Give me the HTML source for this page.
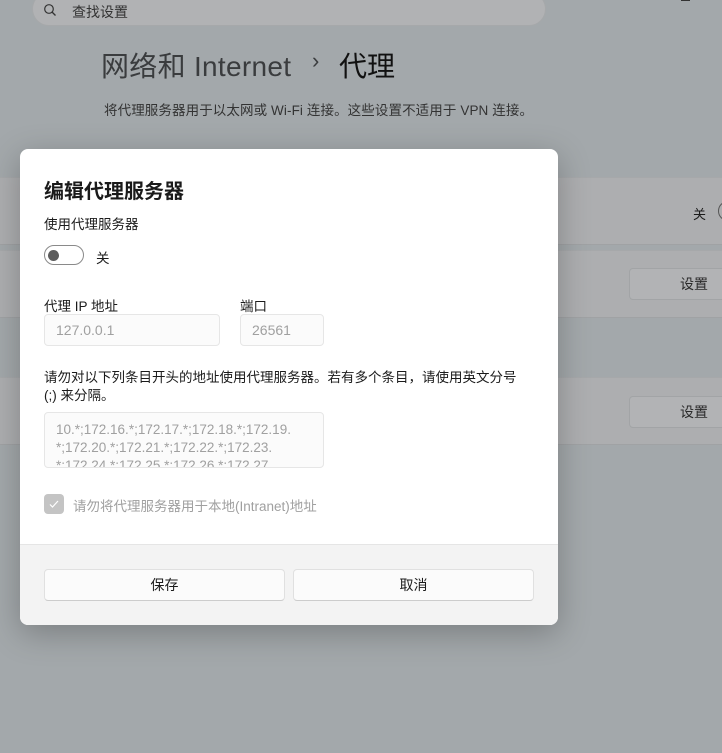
<!DOCTYPE html>
<html><head><meta charset="utf-8"><style>
*{box-sizing:border-box;margin:0;padding:0}
body{width:722px;height:753px;overflow:hidden;background:#a3a8ab;font-family:"Liberation Sans","Noto Sans CJK SC",sans-serif;position:relative;color:#1b1b1b}
.a{position:absolute}
.card{position:absolute;left:0;width:722px;background:#adaeb0;border-top:1px solid #a6a8aa;border-bottom:1px solid #a0a2a4}
.sbtn{position:absolute;left:629px;width:100px;height:32px;border:1px solid #a2a4a6;border-radius:4px;background:#b2b3b5;font-size:14px;line-height:30px;padding-left:50px;color:#2a2a2a}
.dlg{position:absolute;left:20px;top:149px;width:538px;height:476px;background:#fff;border-radius:8px;overflow:hidden;box-shadow:0 8px 32px rgba(0,0,0,.25)}
.inp{position:absolute;height:32px;border:1px solid #e6e6e6;border-radius:4px;background:#fbfbfb;color:#a0a0a0;font-size:14px;padding-left:11px;line-height:30px}
.btn{position:absolute;top:420px;width:241px;height:32px;background:#fbfbfb;border:1px solid #e0e0e0;border-bottom-color:#ccc;border-radius:4px;font-size:14px;text-align:center;line-height:30px}
</style></head><body>
<div class="a" style="left:32px;top:-8px;width:514px;height:34px;border-radius:17px;background:#b1b2b4;border:1px solid #a6a8aa"></div>
<svg class="a" style="left:43px;top:3px" width="14" height="14" viewBox="0 0 14 14"><circle cx="6" cy="6" r="4.3" fill="none" stroke="#333" stroke-width="1.2"/><path d="M9 9l3.5 3.5" stroke="#333" stroke-width="1.3"/></svg>
<div class="a" style="left:72px;top:2px;font-size:14px;color:#333">查找设置</div>
<div class="a" style="left:681px;top:0;width:9px;height:1px;background:#333"></div>
<div class="a" style="left:101px;top:45px;font-size:28px;color:#3a3c3e;letter-spacing:0.3px">网络和 Internet</div>
<div class="a" style="left:312px;top:48px;font-size:22px;color:#3a3c3e">›</div>
<div class="a" style="left:339px;top:45px;font-size:28px;color:#111">代理</div>
<div class="a" style="left:104px;top:99px;font-size:13.5px;color:#333;letter-spacing:0.1px">将代理服务器用于以太网或 Wi-Fi 连接。这些设置不适用于 VPN 连接。</div>
<div class="card" style="top:177px;height:68px"></div>
<div class="a" style="left:693px;top:204px;font-size:13px">关</div>
<div class="a" style="left:718px;top:201px;width:20px;height:20px;border:1px solid #555;border-radius:10px"></div>
<div class="card" style="top:250px;height:68px"></div>
<div class="sbtn" style="top:268px">设置</div>
<div class="card" style="top:377px;height:68px"></div>
<div class="sbtn" style="top:396px">设置</div>
<div class="dlg">
<div class="a" style="left:24px;top:26px;font-size:20px;font-weight:bold;color:#1a1a1a">编辑代理服务器</div>
<div class="a" style="left:24px;top:64px;font-size:13.5px">使用代理服务器</div>
<div class="a" style="left:24px;top:96px;width:40px;height:20px;border:1px solid #8a8a8a;border-radius:10px"></div>
<div class="a" style="left:28px;top:101px;width:11px;height:11px;border-radius:6px;background:#5c5c5c"></div>
<div class="a" style="left:76px;top:98px;font-size:13.5px">关</div>
<div class="a" style="left:24px;top:146px;font-size:13.5px">代理 IP 地址</div>
<div class="a" style="left:220px;top:146px;font-size:13.5px">端口</div>
<div class="inp" style="left:24px;top:165px;width:176px">127.0.0.1</div>
<div class="inp" style="left:220px;top:165px;width:84px">26561</div>
<div class="a" style="left:24px;top:220px;width:496px;font-size:13.5px;line-height:18px">请勿对以下列条目开头的地址使用代理服务器。若有多个条目，请使用英文分号<br>(;) 来分隔。</div>
<div class="inp" style="left:24px;top:263px;width:280px;height:56px;line-height:18px;padding-top:8px;overflow:hidden;font-size:13.5px">10.*;172.16.*;172.17.*;172.18.*;172.19.<br>*;172.20.*;172.21.*;172.22.*;172.23.<br>*;172.24.*;172.25.*;172.26.*;172.27.</div>
<div class="a" style="left:24px;top:345px;width:20px;height:20px;border-radius:4px;background:#c4c4c4"></div>
<svg class="a" style="left:28px;top:349px" width="12" height="12" viewBox="0 0 12 12"><path d="M2 6.5l2.5 2.5 5.5-6" fill="none" stroke="#fff" stroke-width="1.2"/></svg>
<div class="a" style="left:53px;top:346px;font-size:13.5px;color:#a0a0a0">请勿将代理服务器用于本地(Intranet)地址</div>
<div class="a" style="left:0;top:395px;width:538px;height:81px;background:#f3f3f3;border-top:1px solid #e5e5e5"></div>
<div class="btn" style="left:24px">保存</div>
<div class="btn" style="left:273px">取消</div>
</div>
</body></html>
